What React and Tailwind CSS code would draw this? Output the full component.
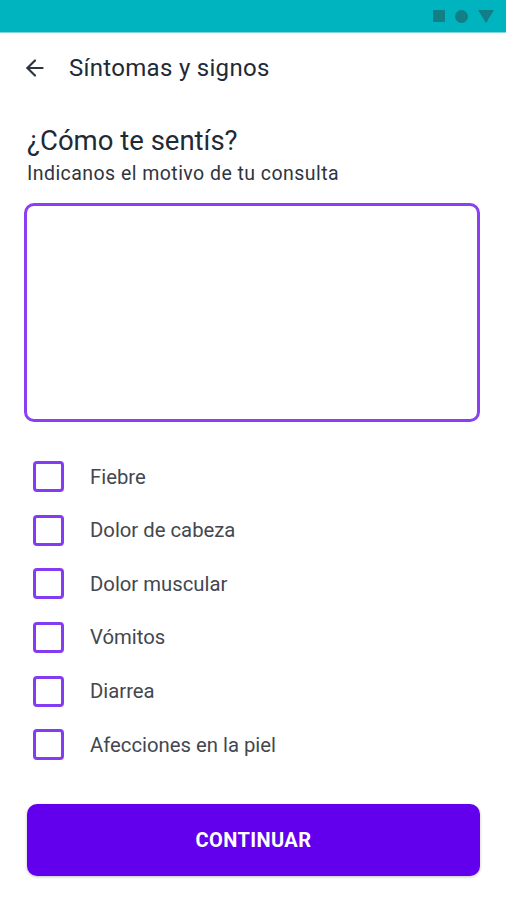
import { ArrowLeft } from 'lucide-react';

export default function App() {
  const sintomas = [
    'Fiebre',
    'Dolor de cabeza',
    'Dolor muscular',
    'Vómitos',
    'Diarrea',
    'Afecciones en la piel',
  ];

  return (
    <div className="w-[506px] h-[900px] bg-white font-['Roboto',sans-serif] flex flex-col">
      <div className="h-[33px] bg-[#00b4bf] flex items-center justify-end gap-[10px] pr-[12px] border-b border-[#7fd6dc]">
        <div className="w-[12px] h-[12px] bg-[#127f86] rounded-[1px]" />
        <div className="w-[13px] h-[13px] bg-[#127f86] rounded-full" />
        <svg width="16" height="13" viewBox="0 0 16 13">
          <path d="M0 0 H16 L8 13 Z" fill="#127f86" />
        </svg>
      </div>

      <div className="h-[70px] flex items-center px-[22px]">
        <ArrowLeft size={26} strokeWidth={2} className="text-[#2d3440]" />
        <h1 className="ml-[21px] text-[24px] leading-[28px] tracking-[0.3px] text-[#1f2a37]">Síntomas y signos</h1>
      </div>

      <div className="px-[24px] flex flex-col">
        <h2 className="mt-[22px] ml-[3px] text-[27.5px] leading-[32px] text-[#1f2a37]">¿Cómo te sentís?</h2>
        <p className="ml-[3px] text-[19.5px] leading-[22px] tracking-[0.45px] text-[#2f3540] mt-[6px]">Indicanos el motivo de tu consulta</p>

        <textarea className="mt-[18px] h-[219px] w-[456px] border-[3px] border-[#8a3ff5] rounded-[10px] outline-none resize-none p-3" />

        <div className="mt-[28px] flex flex-col">
          {sintomas.map((s) => (
            <label key={s} className="h-[53.6px] flex items-center">
              <span className="ml-[9px] w-[31px] h-[31px] border-[3px] border-[#843cf2] rounded-[4px]" />
              <span className="ml-[26px] text-[20.3px] text-[#43474f]">{s}</span>
            </label>
          ))}
        </div>

        <button className="mt-[32px] ml-[3px] h-[72px] w-[453px] bg-[#6200ee] rounded-[10px] text-white font-bold text-[20px] tracking-[0.4px] shadow-[0_1px_3px_rgba(0,0,0,0.25)]">
          CONTINUAR
        </button>
      </div>
    </div>
  );
}
